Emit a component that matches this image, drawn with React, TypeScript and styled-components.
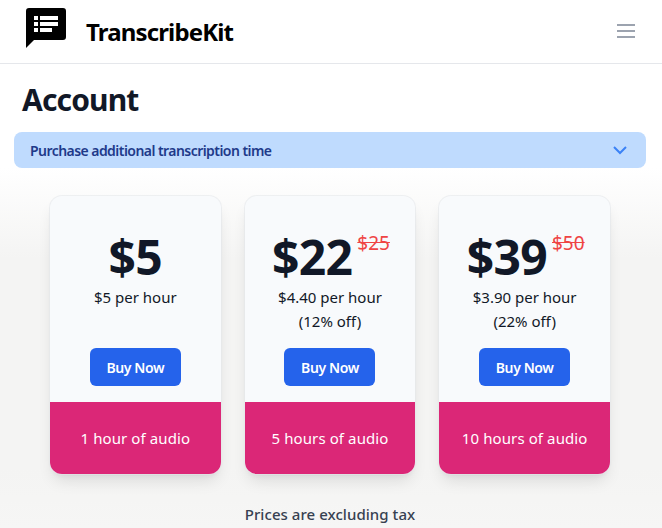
import styled, { createGlobalStyle } from "styled-components";

const GlobalStyle = createGlobalStyle`
    html, body {
        margin: 0;
        padding: 0;
        background: #ffffff;
        font-family: "Noto Sans", "Open Sans", sans-serif;
        color: #111827;
    }
`;

const Page = styled.div`
    height: 528px;
    overflow: hidden;
    display: flex;
    flex-direction: column;
`;

const Header = styled.header`
    height: 63px;
    flex: none;
    display: flex;
    align-items: center;
    justify-content: space-between;
    padding: 0 27px 0 26px;
    border-bottom: 1px solid #e5e7eb;
`;

const Brand = styled.div`
    display: flex;
    align-items: center;
    gap: 20px;
`;

const Logo = styled.svg`
    display: block;
    width: 40px;
    height: 40px;
    margin-bottom: 7px;
`;

const BrandName = styled.span`
    font-size: 24px;
    font-weight: 700;
    letter-spacing: -0.85px;
    color: #000000;
`;

const MenuIcon = styled.svg`
    display: block;
    width: 18px;
    height: 14px;
    margin-bottom: 1px;
`;

const Title = styled.h1`
    margin: 16px 0 12px 22px;
    font-size: 30px;
    line-height: 40px;
    font-weight: 700;
    letter-spacing: -0.85px;
    color: #111827;
`;

const Accordion = styled.div`
    margin: 0 16px 0 14px;
    height: 36px;
    display: flex;
    align-items: center;
    justify-content: space-between;
    padding: 0 19px 0 16px;
    background: #bfdbfe;
    border-radius: 8px;
    font-size: 14px;
    font-weight: 600;
    letter-spacing: -0.55px;
    color: #1e3a8a;
`;

const Section = styled.section`
    flex: 1;
    display: flex;
    flex-direction: column;
    align-items: center;
    padding: 28px 2px 0 0;
    background: linear-gradient(#ffffff, #f4f4f3 90px, #f4f4f3 300px, #f6f6f5);
`;

const CardRow = styled.div`
    width: 560px;
    display: grid;
    grid-template-columns: repeat(3, 1fr);
    gap: 24px;
`;

const Card = styled.div`
    height: 278px;
    display: flex;
    flex-direction: column;
    background: #f8fafc;
    border-radius: 12px;
    box-shadow: 0 0 0 1px rgba(229, 231, 235, 0.6), 0 10px 15px -3px rgba(0, 0, 0, 0.1),
        0 4px 6px -4px rgba(0, 0, 0, 0.1);
    overflow: hidden;
`;

const CardBody = styled.div`
    flex: 1;
    display: flex;
    flex-direction: column;
    align-items: center;
    padding-top: 28px;
`;

const PriceRow = styled.div`
    height: 61px;
    display: flex;
    align-items: flex-start;
`;

const Price = styled.span`
    font-size: 48px;
    line-height: 65px;
    font-weight: 700;
    letter-spacing: -0.7px;
    color: #111827;
`;

const OldPrice = styled.s`
    margin: 7px -2px 0 5px;
    font-size: 19px;
    line-height: 24px;
    color: #ef4444;
`;

const Rate = styled.div`
    height: 63px;
    font-size: 15px;
    line-height: 24px;
    text-align: center;
    color: #111827;
`;

const BuyButton = styled.button`
    width: 91px;
    height: 38px;
    border: none;
    border-radius: 6px;
    background: #2563eb;
    color: #ffffff;
    font-family: inherit;
    font-size: 14px;
    font-weight: 600;
    letter-spacing: -0.4px;
`;

const Hours = styled.div`
    height: 72px;
    flex: none;
    display: flex;
    align-items: center;
    justify-content: center;
    background: #db2777;
    color: #ffffff;
    font-size: 15px;
    letter-spacing: 0.1px;
`;

const Note = styled.p`
    margin: 30px 0 0;
    font-size: 15px;
    line-height: 20px;
    font-weight: 500;
    letter-spacing: 0.05px;
    color: #374151;
`;

const plans = [
    { price: "$5", rate: ["$5 per hour"], hours: "1 hour of audio" },
    { price: "$22", old: "$25", rate: ["$4.40 per hour", "(12% off)"], hours: "5 hours of audio" },
    { price: "$39", old: "$50", rate: ["$3.90 per hour", "(22% off)"], hours: "10 hours of audio" },
];

export default function App() {
    return (
        <Page>
            <GlobalStyle />
            <Header>
                <Brand>
                    <Logo viewBox="0 0 40 40">
                        <path d="M3 0h34a3 3 0 0 1 3 3v26a3 3 0 0 1-3 3H8l-8 8V3a3 3 0 0 1 3-3z" fill="#000" />
                        <path d="M8 8h4v4H8zM14 8h18v4H14zM8 14h4v4H8zM14 14h18v4H14zM8 20h4v4H8zM14 20h12v4H14z" fill="#fff" />
                    </Logo>
                    <BrandName>TranscribeKit</BrandName>
                </Brand>
                <MenuIcon viewBox="0 0 18 14">
                    <path d="M0 1h18M0 7h18M0 13h18" stroke="#9ca3af" strokeWidth="2" fill="none" />
                </MenuIcon>
            </Header>
            <Title>Account</Title>
            <Accordion>
                Purchase additional transcription time
                <svg width="14" height="9" viewBox="0 0 14 9">
                    <path d="M1 1l6 6 6-6" stroke="#3b82f6" strokeWidth="2" fill="none" />
                </svg>
            </Accordion>
            <Section>
                <CardRow>
                    {plans.map((plan) => (
                        <Card key={plan.price}>
                            <CardBody>
                                <PriceRow>
                                    <Price>{plan.price}</Price>
                                    {plan.old && <OldPrice>{plan.old}</OldPrice>}
                                </PriceRow>
                                <Rate>
                                    {plan.rate.map((line) => (
                                        <div key={line}>{line}</div>
                                    ))}
                                </Rate>
                                <BuyButton>Buy Now</BuyButton>
                            </CardBody>
                            <Hours>{plan.hours}</Hours>
                        </Card>
                    ))}
                </CardRow>
                <Note>Prices are excluding tax</Note>
            </Section>
        </Page>
    );
}
